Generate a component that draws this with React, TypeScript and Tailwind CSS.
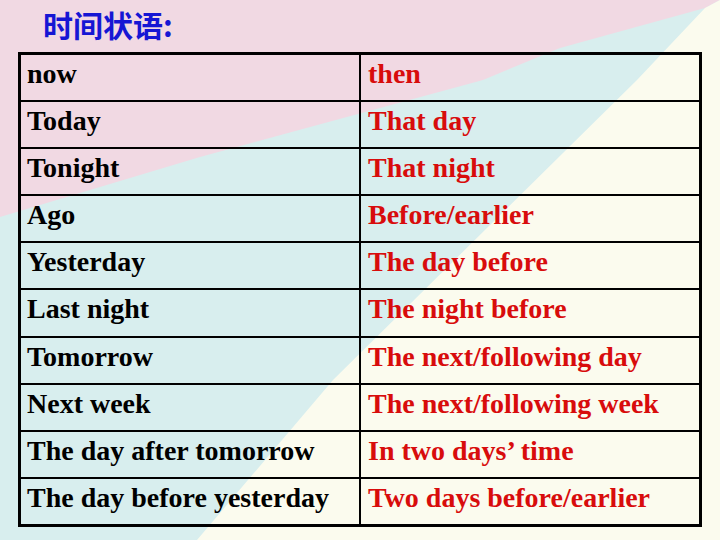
import React from "react"

// Reported speech: time adverbial shifts (direct -> indirect)
const ROWS: [string, string][] = [
  ["now", "then"],
  ["Today", "That day"],
  ["Tonight", "That night"],
  ["Ago", "Before/earlier"],
  ["Yesterday", "The day before"],
  ["Last night", "The night before"],
  ["Tomorrow", "The next/following day"],
  ["Next week", "The next/following week"],
  ["The day after tomorrow", "In two days’ time"],
  ["The day before yesterday", "Two days before/earlier"],
]

function Backdrop() {
  // slide background: pink wedge, cyan band, cream corner
  return (
    <svg className="absolute inset-0" width="720" height="540" viewBox="0 0 720 540">
      <rect width="720" height="540" fill="#d8eeee" />
      <polygon
        points="0,0 720,0 705,8 560,48 483,80 200,157 0,217"
        fill="#f1d9e3"
      />
      <polygon
        points="720,0 705,8 637,80 333,380 197,540 720,540"
        fill="#fbfbee"
      />
    </svg>
  )
}

export default function App() {
  return (
    <div className="relative w-[720px] h-[540px] overflow-hidden">
      <Backdrop />
      <div className="relative pt-[8px]">
        <h1
          className="pl-[43px] text-[30px] leading-[33px] font-bold text-[#1616d4]"
          style={{ fontFamily: '"Noto Sans CJK SC", "Liberation Sans", sans-serif' }}
        >
          时间状语:
        </h1>

        <div
          className="mt-[11px] ml-[18px] w-[684px] border-[3px] border-black font-bold text-[28px] leading-[31px]"
          style={{ fontFamily: '"Liberation Serif", "Times New Roman", serif' }}
        >
          {ROWS.map(([now, then], i) => (
            <div
              key={i}
              className={`flex ${i > 0 ? "h-[47.1px] border-t-2 border-black" : "h-[45.1px]"}`}
            >
              <div className="w-[340px] shrink-0 border-r-2 border-black pl-[6px] pt-[3px] text-black whitespace-nowrap">
                {now}
              </div>
              <div className="flex-1 pl-[7px] pt-[3px] text-[#d80c0c] whitespace-nowrap">
                {then}
              </div>
            </div>
          ))}
        </div>
      </div>
    </div>
  )
}
